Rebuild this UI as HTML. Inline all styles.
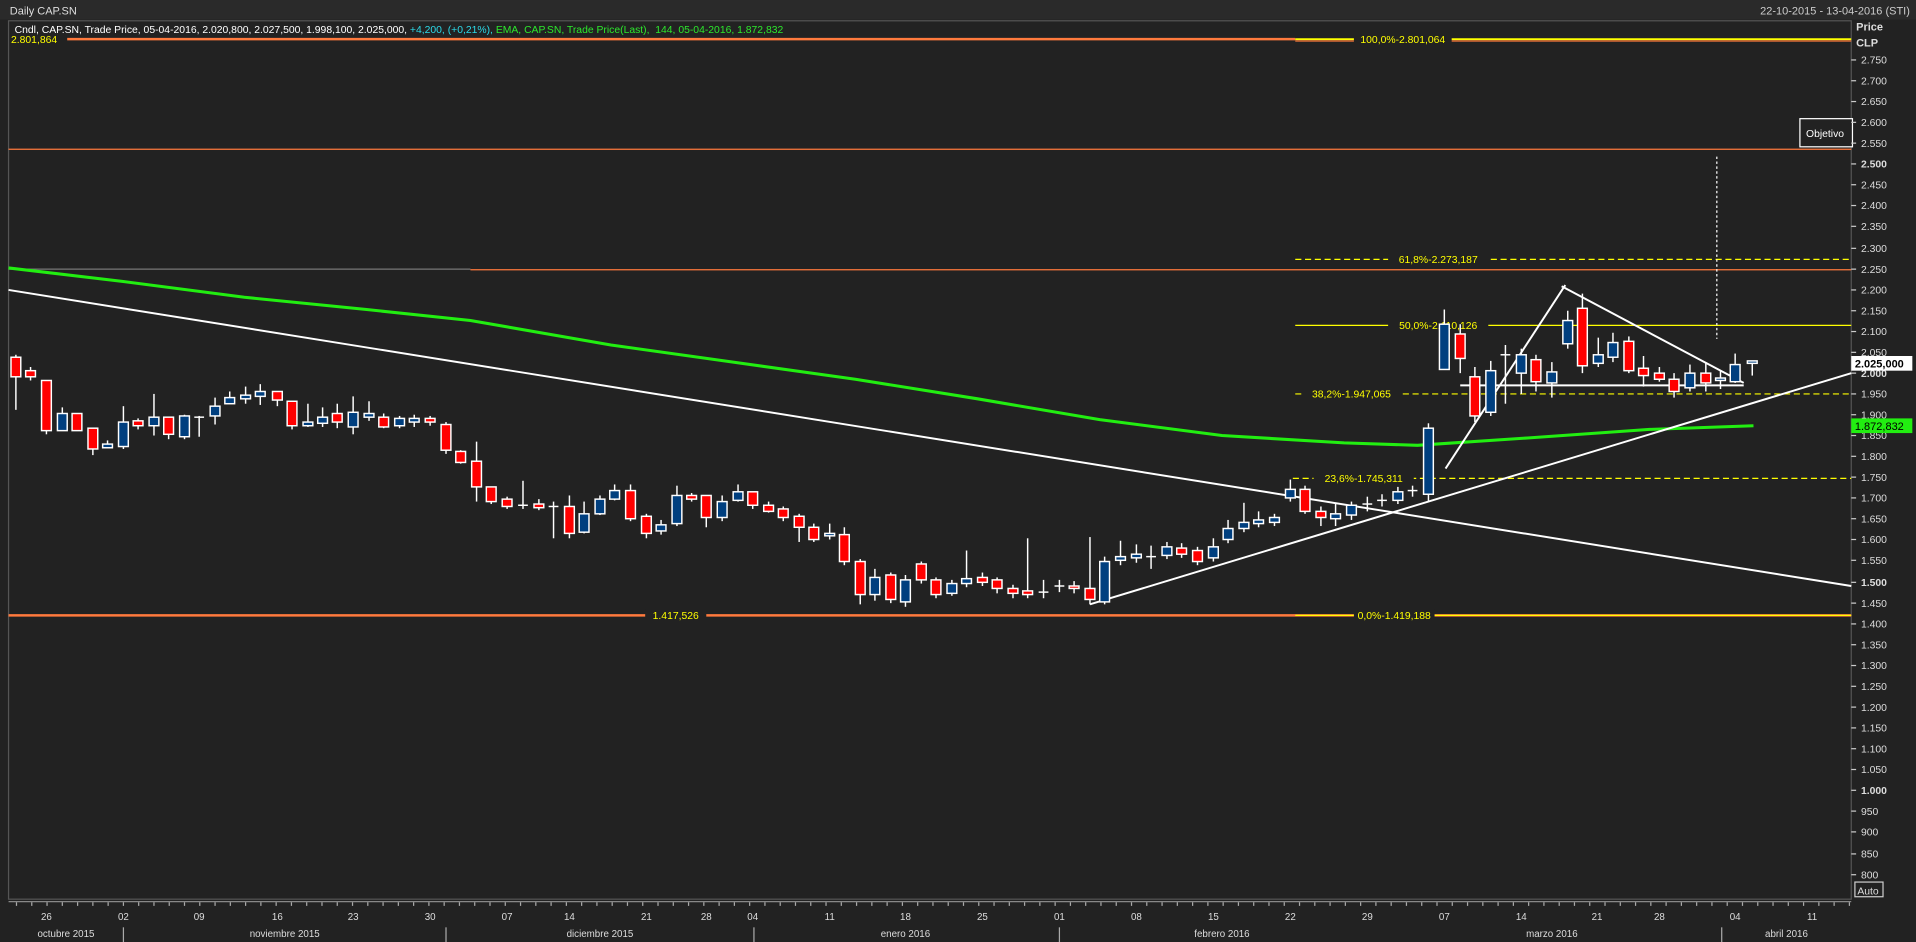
<!DOCTYPE html><html><head><meta charset="utf-8"><style>
html,body{margin:0;padding:0;background:#222;overflow:hidden}
svg{display:block}
text{font-family:"Liberation Sans",sans-serif}
</style></head><body>
<svg width="1916" height="942" viewBox="0 0 1568 770" preserveAspectRatio="none">
<rect width="1568" height="770" fill="#222"/>
<rect width="1568" height="16" fill="#2a2a2a"/>
<text x="8" y="12" font-size="9" fill="#ddd">Daily CAP.SN</text>
<text x="1563" y="12" font-size="9" fill="#ccc" text-anchor="end">22-10-2015 - 13-04-2016 (STI)</text>
<rect x="7" y="17" width="1508" height="718" fill="#222" stroke="#555" stroke-width="1"/>
<text x="12" y="27" font-size="8.5" fill="#fff">Cndl, CAP.SN, Trade Price, 05-04-2016, 2.020,800, 2.027,500, 1.998,100, 2.025,000, <tspan fill="#2cd9e8">+4,200, (+0,21%),</tspan> <tspan fill="#2ce82c">EMA, CAP.SN, Trade Price(Last), &#160;144, 05-04-2016, 1.872,832</tspan></text>
<text x="9" y="35" font-size="8.5" fill="#ff0">2.801,864</text>
<line x1="55" y1="32" x2="1060" y2="32" stroke="#ff7a3d" stroke-width="2"/>
<line x1="1060" y1="32" x2="1515" y2="32" stroke="#ff0" stroke-width="1.5"/>
<line x1="1060" y1="33.5" x2="1515" y2="33.5" stroke="#ff7a3d" stroke-width="1"/>
<rect x="1108" y="27" width="80" height="10" fill="#222"/>
<text x="1148" y="35" font-size="8.5" fill="#ff0" text-anchor="middle">100,0%-2.801,064</text>
<line x1="7" y1="122" x2="1515" y2="122" stroke="#ff7a3d" stroke-width="1"/>
<line x1="7" y1="220" x2="385" y2="220" stroke="#777" stroke-width="1"/>
<line x1="385" y1="220.5" x2="1515" y2="220.5" stroke="#ff7a3d" stroke-width="1"/>
<line x1="7" y1="503" x2="1515" y2="503" stroke="#ff7a3d" stroke-width="2"/>
<line x1="1060" y1="503" x2="1515" y2="503" stroke="#ff0" stroke-width="1"/>
<rect x="528" y="498" width="50" height="10" fill="#222"/>
<text x="553" y="506" font-size="8.5" fill="#ff0" text-anchor="middle">1.417,526</text>
<rect x="1108" y="498" width="66" height="10" fill="#222"/>
<text x="1141" y="506" font-size="8.5" fill="#ff0" text-anchor="middle">0,0%-1.419,188</text>
<line x1="1060" y1="212" x2="1515" y2="212" stroke="#ff0" stroke-dasharray="5,3"/>
<rect x="1136" y="207" width="82" height="10" fill="#222"/>
<text x="1177" y="215" font-size="8.5" fill="#ff0" text-anchor="middle">61,8%-2.273,187</text>
<line x1="1060" y1="266" x2="1515" y2="266" stroke="#ff0"/>
<rect x="1136" y="261" width="82" height="10" fill="#222"/>
<text x="1177" y="269" font-size="8.5" fill="#ff0" text-anchor="middle">50,0%-2.110,126</text>
<line x1="1060" y1="322" x2="1515" y2="322" stroke="#ff0" stroke-dasharray="5,3"/>
<rect x="1065" y="317" width="82" height="10" fill="#222"/>
<text x="1106" y="325" font-size="8.5" fill="#ff0" text-anchor="middle">38,2%-1.947,065</text>
<line x1="1058" y1="391" x2="1515" y2="391" stroke="#ff0" stroke-dasharray="5,3"/>
<rect x="1075" y="386" width="82" height="10" fill="#222"/>
<text x="1116" y="394" font-size="8.5" fill="#ff0" text-anchor="middle">23,6%-1.745,311</text>
<polyline fill="none" stroke="#22ee11" stroke-width="2.5" points="7,219 100,230 200,243 300,253 385,262 500,282 600,296 700,310 800,326 900,343 1000,356 1100,362 1160,364 1250,358 1350,351 1435,348"/>
<g stroke="#fff" stroke-width="1.6" fill="none">
<line x1="7" y1="237" x2="1515" y2="479"/>
<line x1="892" y1="494" x2="1515" y2="305"/>
<line x1="1183" y1="383" x2="1281" y2="233"/>
<line x1="1278" y1="234" x2="1427" y2="313"/>
<line x1="1195" y1="315" x2="1427" y2="315"/>
<line x1="1405" y1="128" x2="1405" y2="277" stroke-width="1" stroke-dasharray="2,2"/>
</g>
<g stroke="#fff" stroke-width="1.2">
<line x1="13" y1="290" x2="13" y2="335"/><rect x="9" y="292" width="8" height="16" fill="#f00"/>
<line x1="25" y1="300" x2="25" y2="311"/><rect x="21" y="303" width="8" height="5" fill="#f00"/>
<line x1="38" y1="311" x2="38" y2="355"/><rect x="34" y="311" width="8" height="41" fill="#f00"/>
<line x1="51" y1="333" x2="51" y2="352"/><rect x="47" y="338" width="8" height="14" fill="#003f7f"/>
<rect x="59" y="338" width="8" height="14" fill="#f00"/>
<line x1="76" y1="350" x2="76" y2="372"/><rect x="72" y="350" width="8" height="17" fill="#f00"/>
<line x1="88" y1="360" x2="88" y2="366"/><rect x="84" y="363" width="8" height="3" fill="#003f7f"/>
<line x1="101" y1="332" x2="101" y2="367"/><rect x="97" y="345" width="8" height="20" fill="#003f7f"/>
<line x1="113" y1="342" x2="113" y2="351"/><rect x="109" y="344" width="8" height="4" fill="#f00"/>
<line x1="126" y1="322" x2="126" y2="356"/><rect x="122" y="341" width="8" height="7" fill="#003f7f"/>
<line x1="138" y1="341" x2="138" y2="359"/><rect x="134" y="341" width="8" height="14" fill="#f00"/>
<line x1="151" y1="339" x2="151" y2="359"/><rect x="147" y="340" width="8" height="17" fill="#003f7f"/>
<line x1="163" y1="340" x2="163" y2="357"/><line x1="159" y1="341" x2="167" y2="341"/>
<line x1="176" y1="325" x2="176" y2="347"/><rect x="172" y="332" width="8" height="8" fill="#003f7f"/>
<line x1="188" y1="320" x2="188" y2="330"/><rect x="184" y="325" width="8" height="5" fill="#003f7f"/>
<line x1="201" y1="316" x2="201" y2="330"/><rect x="197" y="323" width="8" height="3" fill="#003f7f"/>
<line x1="213" y1="314" x2="213" y2="331"/><rect x="209" y="320" width="8" height="4" fill="#003f7f"/>
<line x1="227" y1="320" x2="227" y2="332"/><rect x="223" y="320" width="8" height="7" fill="#f00"/>
<line x1="239" y1="328" x2="239" y2="351"/><rect x="235" y="328" width="8" height="20" fill="#f00"/>
<line x1="252" y1="330" x2="252" y2="349"/><rect x="248" y="345" width="8" height="3" fill="#003f7f"/>
<line x1="264" y1="333" x2="264" y2="349"/><rect x="260" y="341" width="8" height="5" fill="#003f7f"/>
<line x1="276" y1="330" x2="276" y2="350"/><rect x="272" y="338" width="8" height="7" fill="#f00"/>
<line x1="289" y1="324" x2="289" y2="355"/><rect x="285" y="337" width="8" height="12" fill="#003f7f"/>
<line x1="302" y1="328" x2="302" y2="344"/><rect x="298" y="338" width="8" height="3" fill="#003f7f"/>
<line x1="314" y1="338" x2="314" y2="350"/><rect x="310" y="341" width="8" height="8" fill="#f00"/>
<line x1="327" y1="340" x2="327" y2="350"/><rect x="323" y="342" width="8" height="6" fill="#003f7f"/>
<line x1="339" y1="339" x2="339" y2="349"/><rect x="335" y="342" width="8" height="3" fill="#003f7f"/>
<line x1="352" y1="340" x2="352" y2="348"/><rect x="348" y="342" width="8" height="3" fill="#f00"/>
<line x1="365" y1="345" x2="365" y2="371"/><rect x="361" y="347" width="8" height="21" fill="#f00"/>
<line x1="377" y1="368" x2="377" y2="379"/><rect x="373" y="369" width="8" height="9" fill="#f00"/>
<line x1="390" y1="361" x2="390" y2="410"/><rect x="386" y="377" width="8" height="21" fill="#f00"/>
<line x1="402" y1="398" x2="402" y2="412"/><rect x="398" y="398" width="8" height="12" fill="#f00"/>
<line x1="415" y1="406" x2="415" y2="416"/><rect x="411" y="408" width="8" height="6" fill="#f00"/>
<line x1="428" y1="393" x2="428" y2="416"/><line x1="424" y1="413" x2="432" y2="413"/>
<line x1="441" y1="408" x2="441" y2="417"/><rect x="437" y="412" width="8" height="3" fill="#f00"/>
<line x1="453" y1="410" x2="453" y2="440"/><line x1="449" y1="414" x2="457" y2="414"/>
<line x1="466" y1="405" x2="466" y2="440"/><rect x="462" y="414" width="8" height="22" fill="#f00"/>
<line x1="478" y1="410" x2="478" y2="436"/><rect x="474" y="420" width="8" height="15" fill="#003f7f"/>
<line x1="491" y1="405" x2="491" y2="421"/><rect x="487" y="408" width="8" height="12" fill="#003f7f"/>
<line x1="503" y1="396" x2="503" y2="409"/><rect x="499" y="401" width="8" height="7" fill="#003f7f"/>
<line x1="516" y1="396" x2="516" y2="426"/><rect x="512" y="401" width="8" height="23" fill="#f00"/>
<line x1="529" y1="420" x2="529" y2="440"/><rect x="525" y="422" width="8" height="14" fill="#f00"/>
<line x1="541" y1="425" x2="541" y2="437"/><rect x="537" y="429" width="8" height="5" fill="#003f7f"/>
<line x1="554" y1="397" x2="554" y2="430"/><rect x="550" y="405" width="8" height="23" fill="#003f7f"/>
<line x1="566" y1="403" x2="566" y2="410"/><rect x="562" y="405" width="8" height="3" fill="#f00"/>
<line x1="578" y1="405" x2="578" y2="431"/><rect x="574" y="405" width="8" height="18" fill="#f00"/>
<line x1="591" y1="405" x2="591" y2="426"/><rect x="587" y="410" width="8" height="13" fill="#003f7f"/>
<line x1="604" y1="396" x2="604" y2="410"/><rect x="600" y="402" width="8" height="7" fill="#003f7f"/>
<line x1="616" y1="402" x2="616" y2="416"/><rect x="612" y="402" width="8" height="11" fill="#f00"/>
<line x1="629" y1="410" x2="629" y2="419"/><rect x="625" y="413" width="8" height="5" fill="#f00"/>
<line x1="641" y1="414" x2="641" y2="426"/><rect x="637" y="416" width="8" height="7" fill="#f00"/>
<line x1="654" y1="420" x2="654" y2="443"/><rect x="650" y="422" width="8" height="9" fill="#f00"/>
<line x1="666" y1="428" x2="666" y2="443"/><rect x="662" y="431" width="8" height="10" fill="#f00"/>
<line x1="679" y1="428" x2="679" y2="441"/><rect x="675" y="436" width="8" height="2" fill="#003f7f"/>
<line x1="691" y1="431" x2="691" y2="462"/><rect x="687" y="437" width="8" height="22" fill="#f00"/>
<line x1="704" y1="457" x2="704" y2="494"/><rect x="700" y="459" width="8" height="27" fill="#f00"/>
<line x1="716" y1="465" x2="716" y2="491"/><rect x="712" y="472" width="8" height="14" fill="#003f7f"/>
<line x1="729" y1="468" x2="729" y2="493"/><rect x="725" y="470" width="8" height="20" fill="#f00"/>
<line x1="741" y1="470" x2="741" y2="496"/><rect x="737" y="474" width="8" height="18" fill="#003f7f"/>
<line x1="754" y1="459" x2="754" y2="477"/><rect x="750" y="461" width="8" height="13" fill="#f00"/>
<line x1="766" y1="472" x2="766" y2="489"/><rect x="762" y="474" width="8" height="12" fill="#f00"/>
<line x1="779" y1="474" x2="779" y2="487"/><rect x="775" y="477" width="8" height="8" fill="#003f7f"/>
<line x1="791" y1="450" x2="791" y2="480"/><rect x="787" y="473" width="8" height="4" fill="#003f7f"/>
<line x1="804" y1="468" x2="804" y2="479"/><rect x="800" y="472" width="8" height="4" fill="#f00"/>
<line x1="816" y1="472" x2="816" y2="485"/><rect x="812" y="474" width="8" height="7" fill="#f00"/>
<line x1="829" y1="478" x2="829" y2="489"/><rect x="825" y="481" width="8" height="4" fill="#f00"/>
<line x1="841" y1="440" x2="841" y2="489"/><rect x="837" y="483" width="8" height="3" fill="#f00"/>
<line x1="854" y1="474" x2="854" y2="489"/><line x1="850" y1="484" x2="858" y2="484"/>
<line x1="867" y1="474" x2="867" y2="484"/><line x1="863" y1="479" x2="871" y2="479"/>
<line x1="879" y1="475" x2="879" y2="485"/><rect x="875" y="479" width="8" height="2" fill="#f00"/>
<line x1="892" y1="439" x2="892" y2="494"/><rect x="888" y="481" width="8" height="9" fill="#f00"/>
<line x1="904" y1="455" x2="904" y2="494"/><rect x="900" y="459" width="8" height="33" fill="#003f7f"/>
<line x1="917" y1="442" x2="917" y2="462"/><rect x="913" y="455" width="8" height="3" fill="#003f7f"/>
<line x1="930" y1="445" x2="930" y2="460"/><rect x="926" y="453" width="8" height="3" fill="#003f7f"/>
<line x1="942" y1="446" x2="942" y2="465"/><line x1="938" y1="455" x2="946" y2="455"/>
<line x1="955" y1="443" x2="955" y2="457"/><rect x="951" y="447" width="8" height="7" fill="#003f7f"/>
<line x1="967" y1="444" x2="967" y2="456"/><rect x="963" y="448" width="8" height="5" fill="#f00"/>
<line x1="980" y1="447" x2="980" y2="462"/><rect x="976" y="450" width="8" height="9" fill="#f00"/>
<line x1="993" y1="440" x2="993" y2="459"/><rect x="989" y="447" width="8" height="9" fill="#003f7f"/>
<line x1="1005" y1="425" x2="1005" y2="444"/><rect x="1001" y="432" width="8" height="9" fill="#003f7f"/>
<line x1="1018" y1="411" x2="1018" y2="435"/><rect x="1014" y="427" width="8" height="5" fill="#003f7f"/>
<line x1="1030" y1="418" x2="1030" y2="431"/><rect x="1026" y="425" width="8" height="3" fill="#003f7f"/>
<line x1="1043" y1="420" x2="1043" y2="430"/><rect x="1039" y="423" width="8" height="4" fill="#003f7f"/>
<line x1="1056" y1="392" x2="1056" y2="410"/><rect x="1052" y="400" width="8" height="7" fill="#003f7f"/>
<line x1="1068" y1="397" x2="1068" y2="420"/><rect x="1064" y="400" width="8" height="18" fill="#f00"/>
<line x1="1081" y1="414" x2="1081" y2="430"/><rect x="1077" y="418" width="8" height="5" fill="#f00"/>
<line x1="1093" y1="412" x2="1093" y2="430"/><rect x="1089" y="420" width="8" height="4" fill="#003f7f"/>
<line x1="1106" y1="410" x2="1106" y2="425"/><rect x="1102" y="413" width="8" height="8" fill="#003f7f"/>
<line x1="1119" y1="406" x2="1119" y2="418"/><line x1="1115" y1="412" x2="1123" y2="412"/>
<line x1="1131" y1="404" x2="1131" y2="414"/><line x1="1127" y1="409" x2="1135" y2="409"/>
<line x1="1144" y1="398" x2="1144" y2="412"/><rect x="1140" y="402" width="8" height="7" fill="#003f7f"/>
<line x1="1156" y1="397" x2="1156" y2="406"/><line x1="1152" y1="401" x2="1160" y2="401"/>
<line x1="1169" y1="346" x2="1169" y2="410"/><rect x="1165" y="350" width="8" height="54" fill="#003f7f"/>
<line x1="1182" y1="253" x2="1182" y2="302"/><rect x="1178" y="265" width="8" height="37" fill="#003f7f"/>
<line x1="1195" y1="265" x2="1195" y2="305"/><rect x="1191" y="273" width="8" height="20" fill="#f00"/>
<line x1="1207" y1="300" x2="1207" y2="345"/><rect x="1203" y="308" width="8" height="32" fill="#f00"/>
<line x1="1220" y1="295" x2="1220" y2="340"/><rect x="1216" y="303" width="8" height="34" fill="#003f7f"/>
<line x1="1232" y1="282" x2="1232" y2="330"/><line x1="1228" y1="290" x2="1236" y2="290"/>
<line x1="1245" y1="285" x2="1245" y2="322"/><rect x="1241" y="290" width="8" height="15" fill="#003f7f"/>
<line x1="1257" y1="290" x2="1257" y2="320"/><rect x="1253" y="294" width="8" height="18" fill="#f00"/>
<line x1="1270" y1="296" x2="1270" y2="325"/><rect x="1266" y="304" width="8" height="9" fill="#003f7f"/>
<line x1="1283" y1="254" x2="1283" y2="285"/><rect x="1279" y="262" width="8" height="19" fill="#003f7f"/>
<line x1="1295" y1="240" x2="1295" y2="305"/><rect x="1291" y="252" width="8" height="47" fill="#f00"/>
<line x1="1308" y1="276" x2="1308" y2="300"/><rect x="1304" y="290" width="8" height="7" fill="#003f7f"/>
<line x1="1320" y1="272" x2="1320" y2="296"/><rect x="1316" y="280" width="8" height="12" fill="#003f7f"/>
<line x1="1333" y1="275" x2="1333" y2="305"/><rect x="1329" y="279" width="8" height="24" fill="#f00"/>
<line x1="1345" y1="291" x2="1345" y2="316"/><rect x="1341" y="301" width="8" height="6" fill="#f00"/>
<line x1="1358" y1="300" x2="1358" y2="312"/><rect x="1354" y="305" width="8" height="5" fill="#f00"/>
<line x1="1370" y1="305" x2="1370" y2="325"/><rect x="1366" y="310" width="8" height="10" fill="#f00"/>
<line x1="1383" y1="298" x2="1383" y2="320"/><rect x="1379" y="305" width="8" height="12" fill="#003f7f"/>
<line x1="1396" y1="296" x2="1396" y2="320"/><rect x="1392" y="305" width="8" height="8" fill="#f00"/>
<line x1="1408" y1="303" x2="1408" y2="318"/><rect x="1404" y="309" width="8" height="2" fill="#003f7f"/>
<line x1="1420" y1="289" x2="1420" y2="313"/><rect x="1416" y="298" width="8" height="14" fill="#003f7f"/>
<line x1="1434" y1="295" x2="1434" y2="307"/><rect x="1430" y="295" width="8" height="2" fill="#003f7f"/>
</g>
<rect x="1473" y="97" width="43" height="23" fill="#222" stroke="#fff"/>
<text x="1478" y="112" font-size="8.5" fill="#fff">Objetivo</text>
<text x="1519" y="25" font-size="9" font-weight="bold" fill="#ddd">Price</text>
<text x="1519" y="38" font-size="9" font-weight="bold" fill="#ddd">CLP</text>
<g font-size="8.5" fill="#ddd" stroke="none">
<text x="1523" y="52">2.750</text><text x="1523" y="69">2.700</text><text x="1523" y="86">2.650</text><text x="1523" y="103">2.600</text><text x="1523" y="120">2.550</text><text x="1523" y="137" font-weight="bold">2.500</text><text x="1523" y="154">2.450</text><text x="1523" y="171">2.400</text><text x="1523" y="188">2.350</text><text x="1523" y="206">2.300</text><text x="1523" y="223">2.250</text><text x="1523" y="240">2.200</text><text x="1523" y="257">2.150</text><text x="1523" y="274">2.100</text><text x="1523" y="291">2.050</text><text x="1523" y="308" font-weight="bold">2.000</text><text x="1523" y="325">1.950</text><text x="1523" y="342">1.900</text><text x="1523" y="359">1.850</text><text x="1523" y="376">1.800</text><text x="1523" y="393">1.750</text><text x="1523" y="410">1.700</text><text x="1523" y="427">1.650</text><text x="1523" y="444">1.600</text><text x="1523" y="461">1.550</text><text x="1523" y="479" font-weight="bold">1.500</text><text x="1523" y="496">1.450</text><text x="1523" y="513">1.400</text><text x="1523" y="530">1.350</text><text x="1523" y="547">1.300</text><text x="1523" y="564">1.250</text><text x="1523" y="581">1.200</text><text x="1523" y="598">1.150</text><text x="1523" y="615">1.100</text><text x="1523" y="632">1.050</text><text x="1523" y="649" font-weight="bold">1.000</text><text x="1523" y="666">950</text><text x="1523" y="683">900</text><text x="1523" y="701">850</text><text x="1523" y="718">800</text>
</g>
<g stroke="#ccc">
<line x1="1515" y1="49" x2="1519" y2="49"/><line x1="1515" y1="66" x2="1519" y2="66"/><line x1="1515" y1="83" x2="1519" y2="83"/><line x1="1515" y1="100" x2="1519" y2="100"/><line x1="1515" y1="117" x2="1519" y2="117"/><line x1="1515" y1="134" x2="1519" y2="134"/><line x1="1515" y1="151" x2="1519" y2="151"/><line x1="1515" y1="168" x2="1519" y2="168"/><line x1="1515" y1="185" x2="1519" y2="185"/><line x1="1515" y1="203" x2="1519" y2="203"/><line x1="1515" y1="220" x2="1519" y2="220"/><line x1="1515" y1="237" x2="1519" y2="237"/><line x1="1515" y1="254" x2="1519" y2="254"/><line x1="1515" y1="271" x2="1519" y2="271"/><line x1="1515" y1="288" x2="1519" y2="288"/><line x1="1515" y1="305" x2="1519" y2="305"/><line x1="1515" y1="322" x2="1519" y2="322"/><line x1="1515" y1="339" x2="1519" y2="339"/><line x1="1515" y1="356" x2="1519" y2="356"/><line x1="1515" y1="373" x2="1519" y2="373"/><line x1="1515" y1="390" x2="1519" y2="390"/><line x1="1515" y1="407" x2="1519" y2="407"/><line x1="1515" y1="424" x2="1519" y2="424"/><line x1="1515" y1="441" x2="1519" y2="441"/><line x1="1515" y1="458" x2="1519" y2="458"/><line x1="1515" y1="476" x2="1519" y2="476"/><line x1="1515" y1="493" x2="1519" y2="493"/><line x1="1515" y1="510" x2="1519" y2="510"/><line x1="1515" y1="527" x2="1519" y2="527"/><line x1="1515" y1="544" x2="1519" y2="544"/><line x1="1515" y1="561" x2="1519" y2="561"/><line x1="1515" y1="578" x2="1519" y2="578"/><line x1="1515" y1="595" x2="1519" y2="595"/><line x1="1515" y1="612" x2="1519" y2="612"/><line x1="1515" y1="629" x2="1519" y2="629"/><line x1="1515" y1="646" x2="1519" y2="646"/><line x1="1515" y1="663" x2="1519" y2="663"/><line x1="1515" y1="680" x2="1519" y2="680"/><line x1="1515" y1="698" x2="1519" y2="698"/><line x1="1515" y1="715" x2="1519" y2="715"/>
</g>
<rect x="1515" y="291" width="50" height="12" fill="#fff"/>
<text x="1518" y="300.5" font-size="9" font-weight="bold" fill="#000">2.025,000</text>
<rect x="1515" y="342" width="50" height="12" fill="#22ee11"/>
<text x="1518" y="351.5" font-size="9" fill="#000">1.872,832</text>
<rect x="1518" y="721" width="23" height="12" fill="#222" stroke="#ccc"/>
<text x="1520" y="731" font-size="8.5" fill="#ddd">Auto</text>
<line x1="7" y1="737" x2="1515" y2="737" stroke="#888"/>
<g font-size="8" fill="#ddd" text-anchor="middle">
<text x="38" y="752">26</text><text x="101" y="752">02</text><text x="163" y="752">09</text><text x="227" y="752">16</text><text x="289" y="752">23</text><text x="352" y="752">30</text><text x="415" y="752">07</text><text x="466" y="752">14</text><text x="529" y="752">21</text><text x="578" y="752">28</text><text x="616" y="752">04</text><text x="679" y="752">11</text><text x="741" y="752">18</text><text x="804" y="752">25</text><text x="867" y="752">01</text><text x="930" y="752">08</text><text x="993" y="752">15</text><text x="1056" y="752">22</text><text x="1119" y="752">29</text><text x="1182" y="752">07</text><text x="1245" y="752">14</text><text x="1307" y="752">21</text><text x="1358" y="752">28</text><text x="1420" y="752">04</text><text x="1483" y="752">11</text>
<text x="54" y="766">octubre 2015</text><text x="233" y="766">noviembre 2015</text><text x="491" y="766">diciembre 2015</text><text x="741" y="766">enero 2016</text><text x="1000" y="766">febrero 2016</text><text x="1270" y="766">marzo 2016</text><text x="1462" y="766">abril 2016</text>
</g>
<g stroke="#aaa">
<line x1="101" y1="758" x2="101" y2="770"/><line x1="365" y1="758" x2="365" y2="770"/><line x1="617" y1="758" x2="617" y2="770"/><line x1="867" y1="758" x2="867" y2="770"/><line x1="1409" y1="758" x2="1409" y2="770"/>
</g>
<g stroke="#aaa" stroke-dasharray="1,11.5">
<line x1="13" y1="739" x2="1515" y2="739" stroke-width="3"/>
</g>
</svg>
</body></html>
